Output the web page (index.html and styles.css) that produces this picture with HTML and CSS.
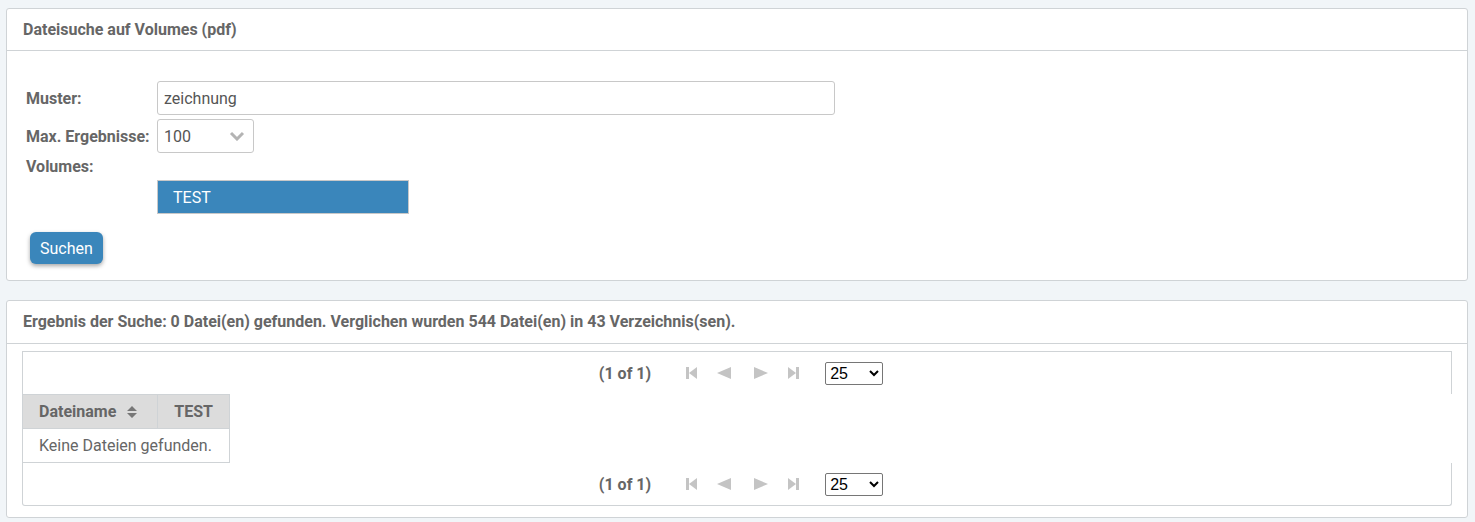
FILE: index.html
```html
<!DOCTYPE html>
<html lang="de">
<head>
<meta charset="utf-8">
<title>Dateisuche</title>
<link rel="stylesheet" href="styles.css">
</head>
<body>
<div class="page">
  <section class="panel">
    <header class="panel-head">Dateisuche auf Volumes (pdf)</header>
    <div class="panel-body form-body">
      <div class="form-grid">
        <label class="lbl">Muster:</label>
        <div class="field"><div class="input">zeichnung</div></div>
        <label class="lbl">Max. Ergebnisse:</label>
        <div class="field">
          <div class="dropdown"><span>100</span>
            <svg class="chev" width="16" height="10" viewBox="0 0 16 10"><path d="M2 2 L8 8 L14 2" fill="none" stroke="#b4b4b4" stroke-width="3"/></svg>
          </div>
        </div>
        <label class="lbl lbl-vol">Volumes:</label>
        <div></div>
        <div></div>
        <div class="field"><div class="listbox"><div class="list-item">TEST</div></div></div>
      </div>
      <button class="btn">Suchen</button>
    </div>
  </section>

  <section class="panel panel-result">
    <header class="panel-head head-result">Ergebnis der Suche: 0 Datei(en) gefunden. Verglichen wurden 544 Datei(en) in 43 Verzeichnis(sen).</header>
    <div class="panel-body result-body">
      <div class="datatable">
        <div class="paginator pag-top">
          <span class="pag-text">(1 of 1)</span>
          <span class="pag-icons">
            <span class="pbtn"><svg width="16" height="14" viewBox="0 0 16 14"><rect x="2" y="1" width="3" height="12" fill="#c4c4c4"/><path d="M13 1 L5 7 L13 13 Z" fill="#c4c4c4"/></svg></span>
            <span class="pbtn"><svg width="16" height="14" viewBox="0 0 16 14"><path d="M15 1 L1 7 L15 13 Z" fill="#c4c4c4"/></svg></span>
            <span class="pbtn pbtn-next"><svg width="16" height="14" viewBox="0 0 16 14"><path d="M1 1 L15 7 L1 13 Z" fill="#c4c4c4"/></svg></span>
            <span class="pbtn"><svg width="16" height="14" viewBox="0 0 16 14"><path d="M3 1 L11 7 L3 13 Z" fill="#c4c4c4"/><rect x="11" y="1" width="3" height="12" fill="#c4c4c4"/></svg></span>
          </span>
          <select class="rpp"><option>25</option></select>
        </div>
        <table class="grid">
          <thead>
            <tr>
              <th class="col-name">Dateiname <svg class="sort" width="10" height="12" viewBox="0 0 10 12"><path d="M5 0 L10 5 L0 5 Z M0 7 L10 7 L5 12 Z" fill="#777"/></svg></th>
              <th>TEST</th>
            </tr>
          </thead>
          <tbody>
            <tr><td colspan="2">Keine Dateien gefunden.</td></tr>
          </tbody>
        </table>
        <div class="paginator pag-bottom">
          <span class="pag-text">(1 of 1)</span>
          <span class="pag-icons">
            <span class="pbtn"><svg width="16" height="14" viewBox="0 0 16 14"><rect x="2" y="1" width="3" height="12" fill="#c4c4c4"/><path d="M13 1 L5 7 L13 13 Z" fill="#c4c4c4"/></svg></span>
            <span class="pbtn"><svg width="16" height="14" viewBox="0 0 16 14"><path d="M15 1 L1 7 L15 13 Z" fill="#c4c4c4"/></svg></span>
            <span class="pbtn pbtn-next"><svg width="16" height="14" viewBox="0 0 16 14"><path d="M1 1 L15 7 L1 13 Z" fill="#c4c4c4"/></svg></span>
            <span class="pbtn"><svg width="16" height="14" viewBox="0 0 16 14"><path d="M3 1 L11 7 L3 13 Z" fill="#c4c4c4"/><rect x="11" y="1" width="3" height="12" fill="#c4c4c4"/></svg></span>
          </span>
          <select class="rpp"><option>25</option></select>
        </div>
      </div>
    </div>
  </section>
</div>
</body>
</html>
```
FILE: styles.css
```css
html, body {
  margin: 0;
  padding: 0;
  background: #f1f5f8;
}
body {
  font-family: Roboto, "Liberation Sans", Arial, sans-serif;
  font-size: 16px;
  color: #666;
}
.page {
  padding: 8px 7px 0 6px;
}
.panel {
  background: #fff;
  border: 1px solid #cfd3d6;
  border-radius: 3px;
}
.panel-result {
  margin-top: 19px;
}
.panel-head {
  height: 40px;
  border-bottom: 1px solid #cfd3d6;
  padding: 0 16px 1px 16px;
  display: flex;
  align-items: center;
  font-weight: 700;
  font-size: 16px;
  color: #666;
}
.head-result {
  height: 41px;
}
.form-body {
  padding: 30px 0 16px 19px;
}
.form-grid {
  display: grid;
  grid-template-columns: 131px auto;
  grid-template-rows: 34px 34px 19px 34px;
  row-gap: 4px;
  align-items: center;
}
.lbl {
  font-weight: 700;
  font-size: 16px;
  color: #666;
}
.input {
  box-sizing: border-box;
  width: 678px;
  height: 34px;
  border: 1px solid #c8c8c8;
  border-radius: 3px;
  padding: 0 6px;
  display: flex;
  align-items: center;
  color: #555;
  font-size: 16px;
}
.dropdown {
  box-sizing: border-box;
  width: 97px;
  height: 34px;
  border: 1px solid #c8c8c8;
  border-radius: 3px;
  padding: 0 8px 0 6px;
  display: flex;
  align-items: center;
  justify-content: space-between;
  color: #555;
  font-size: 16px;
}
.listbox {
  box-sizing: border-box;
  width: 252px;
  height: 34px;
  border: 1px solid #c8c8c8;
}
.list-item {
  height: 100%;
  background: #3a86bb;
  color: #fff;
  display: flex;
  align-items: center;
  padding-left: 15px;
  font-size: 16px;
}
.btn {
  margin: 18px 0 0 4px;
  height: 32px;
  padding: 0 10px;
  border: none;
  border-radius: 6px;
  background: #3a86bb;
  color: #fff;
  font-family: Roboto, "Liberation Sans", Arial, sans-serif;
  font-size: 16px;
  box-shadow: 0 2px 4px rgba(0,0,0,0.35);
}
.result-body {
  padding: 7px 15px 11px 15px;
}
.datatable {
  display: flex;
  flex-direction: column;
}
.paginator {
  height: 42px;
  display: flex;
  align-items: center;
  justify-content: center;
  border-left: 1px solid #cfd3d6;
  border-right: 1px solid #cfd3d6;
}
.pag-top {
  border-top: 1px solid #cfd3d6;
}
.pag-bottom {
  border-bottom: 1px solid #cfd3d6;
  border-radius: 0 0 3px 3px;
}
.pag-text {
  font-weight: 700;
  font-size: 16px;
  color: #666;
  margin-left: 8px;
}
.pag-icons {
  display: flex;
  margin: 0 16px 0 25px;
}
.pbtn {
  width: 32px;
  height: 20px;
  display: flex;
  align-items: center;
  justify-content: center;
}
.pbtn-next {
  padding-left: 5px;
}
.rpp {
  width: 58px;
  height: 23px;
  font-family: Arial, "Liberation Sans", sans-serif;
  font-size: 16px;
  color: #000;
  background: #fff;
  border: 1px solid #767676;
  border-radius: 2px;
}
.grid {
  border-collapse: collapse;
  align-self: flex-start;
}
.grid th {
  height: 34px;
  box-sizing: border-box;
  background: #dcdcdc;
  border: 1px solid #cfd3d6;
  padding: 0 16px;
  font-weight: 700;
  font-size: 16px;
  color: #666;
  text-align: left;
  white-space: nowrap;
}
.grid .col-name {
  padding-right: 20px;
}
.sort {
  margin-left: 7px;
  vertical-align: -1px;
}
.grid td {
  height: 34px;
  box-sizing: border-box;
  border: 1px solid #cfd3d6;
  padding: 0 16px;
  font-size: 16px;
  color: #666;
}
```
